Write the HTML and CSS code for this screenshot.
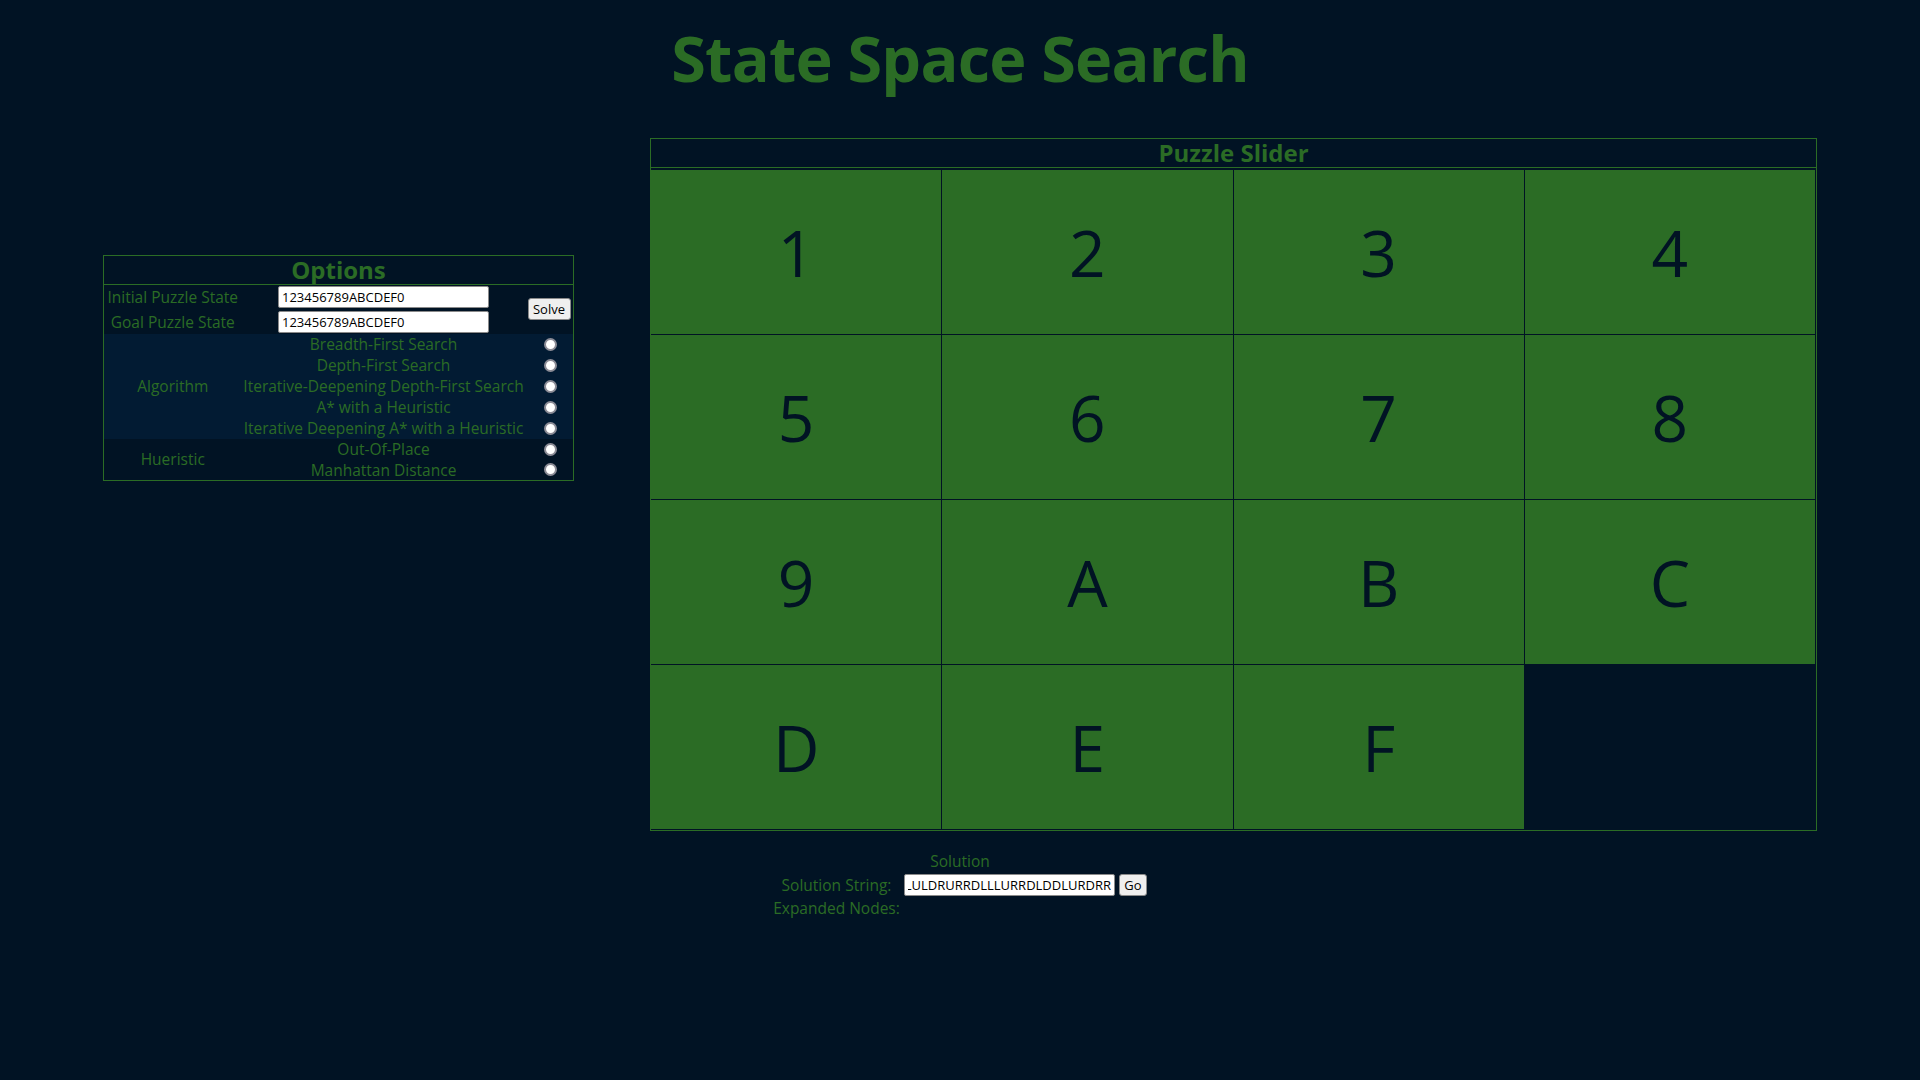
FILE: index.html
```html
<!DOCTYPE html>
<html lang="en">
<head>
<meta charset="utf-8">
<title>State Space Search</title>
<link rel="stylesheet" href="styles.css">
</head>
<body>
<h1 class="title">State Space Search</h1>
<div class="main">
  <table class="options">
    <colgroup><col class="c1"><col class="c2"><col class="c3"></colgroup>
    <thead><tr><th colspan="3" class="opt-head">Options</th></tr></thead>
    <tbody class="states">
      <tr class="r1">
        <td class="lbl">Initial Puzzle State</td>
        <td class="mid"><input class="field state" type="text" value="123456789ABCDEF0"></td>
        <td rowspan="2" class="btncell"><button class="btn solve" type="button">Solve</button></td>
      </tr>
      <tr class="r2">
        <td class="lbl">Goal Puzzle State</td>
        <td class="mid"><input class="field state" type="text" value="123456789ABCDEF0"></td>
      </tr>
    </tbody>
    <tbody class="algos">
      <tr><td rowspan="5" class="lbl">Algorithm</td><td class="mid">Breadth-First Search</td><td class="rc"><input class="radio" type="radio" name="algo"></td></tr>
      <tr><td class="mid">Depth-First Search</td><td class="rc"><input class="radio" type="radio" name="algo"></td></tr>
      <tr><td class="mid">Iterative-Deepening Depth-First Search</td><td class="rc"><input class="radio" type="radio" name="algo"></td></tr>
      <tr><td class="mid">A* with a Heuristic</td><td class="rc"><input class="radio" type="radio" name="algo"></td></tr>
      <tr><td class="mid">Iterative Deepening A* with a Heuristic</td><td class="rc"><input class="radio" type="radio" name="algo"></td></tr>
    </tbody>
    <tbody class="heur">
      <tr><td rowspan="2" class="lbl">Hueristic</td><td class="mid">Out-Of-Place</td><td class="rc"><input class="radio" type="radio" name="heur"></td></tr>
      <tr><td class="mid">Manhattan Distance</td><td class="rc"><input class="radio" type="radio" name="heur"></td></tr>
    </tbody>
  </table>

  <div class="puzzle">
    <div class="puzzle-head">Puzzle Slider</div>
    <div class="board">
      <div class="tile">1</div><div class="tile">2</div><div class="tile">3</div><div class="tile">4</div>
      <div class="tile">5</div><div class="tile">6</div><div class="tile">7</div><div class="tile">8</div>
      <div class="tile">9</div><div class="tile">A</div><div class="tile">B</div><div class="tile">C</div>
      <div class="tile">D</div><div class="tile">E</div><div class="tile">F</div><div class="tile blank"></div>
    </div>
  </div>
</div>

<div class="solution">
  <div class="sol-head">Solution</div>
  <div class="sol-label">Solution String:</div>
  <div class="sol-controls">
    <input class="field sol-input" type="text" value="RDLULDRURRDLLLURRDLDDLURDRR">
    <button class="btn go" type="button">Go</button>
  </div>
  <div class="sol-label">Expanded Nodes:</div>
  <div class="sol-empty"></div>
</div>
</body>
</html>
```
FILE: styles.css
```css
html, body {
  margin: 0;
  padding: 0;
}
body {
  background: #011324;
  color: #2b6c25;
  font-family: "Open Sans", "Noto Sans", sans-serif;
  font-size: 16px;
  min-height: 100vh;
}
.title {
  margin: 26px 0 0;
  text-align: center;
  font-size: 63px;
  line-height: 63px;
  font-weight: 700;
  letter-spacing: -0.8px;
}
.main {
  display: flex;
  align-items: flex-start;
  gap: 76px;
  padding: 0 103px;
  margin-top: 49px;
}

/* Options panel */
.options {
  margin-top: 117px;
  width: 470px;
  border-collapse: collapse;
  border: 1px solid #2b6c25;
  table-layout: fixed;
  flex: 0 0 auto;
}
.c1 { width: 138px; }
.c2 { width: 284px; }
.c3 { width: 48px; }
.options td, .options th {
  padding: 0;
  text-align: center;
  vertical-align: middle;
  white-space: nowrap;
  line-height: 20px;
}
.opt-head {
  height: 28px;
  line-height: 28px;
  font-size: 24px;
  font-weight: 700;
  border-bottom: 1px solid #2b6c25;
}
.states .r1 { height: 25px; }
.states .r2 { height: 24px; }
.algos { background: #021b33; }
.algos tr, .heur tr { height: 21px; }
.mid { font-size: 15.5px; }
.lbl { font-size: 15.5px; }
.rc { text-align: left; }
.radio {
  appearance: none;
  -webkit-appearance: none;
  display: block;
  box-sizing: border-box;
  width: 13px;
  height: 13px;
  margin: 0 0 0 18px;
  border: 2px solid #8c8c96;
  border-radius: 50%;
  background: #ffffff;
}
.field {
  box-sizing: border-box;
  height: 22px;
  background: #fff;
  color: #000;
  border: 1px solid #8a8a8a;
  border-radius: 2px;
  padding: 1px 3px;
  font-family: "Open Sans", "Noto Sans", sans-serif;
  font-size: 13px;
  outline: none;
}
.state {
  width: 211px;
  display: block;
  margin: 0 auto;
}
.btn {
  box-sizing: border-box;
  height: 22px;
  background: #efefef;
  color: #000;
  border: 1px solid #8a8a8a;
  border-radius: 3px;
  font-family: "Open Sans", "Noto Sans", sans-serif;
  font-size: 13px;
  padding: 0;
}
.solve {
  width: 43px;
  display: block;
  margin: 0 0 0 2px;
}

/* Puzzle */
.puzzle {
  box-sizing: border-box;
  width: 1167px;
  border: 1px solid #2b6c25;
  flex: 0 0 auto;
}
.puzzle-head {
  height: 28px;
  line-height: 28px;
  text-align: center;
  font-size: 24px;
  font-weight: 700;
  border-bottom: 1px solid #2b6c25;
}
.board {
  display: grid;
  grid-template-columns: repeat(4, 1fr);
  grid-auto-rows: 164px;
  gap: 1px;
  padding: 2px 1px 1px 0;
}
.tile {
  background: #2b6c25;
  color: #011324;
  font-size: 64px;
  display: flex;
  align-items: center;
  justify-content: center;
}
.tile.blank {
  background: transparent;
}

/* Solution */
.solution {
  margin-top: 19px;
  display: grid;
  grid-template-columns: 129px 244px;
  column-gap: 3px;
  justify-content: center;
  font-size: 15.5px;
}
.sol-head {
  grid-column: 1 / -1;
  text-align: center;
  line-height: 22px;
}
.sol-label {
  text-align: center;
  line-height: 22px;
  white-space: nowrap;
  align-self: center;
}
.sol-controls {
  display: flex;
  align-items: center;
  gap: 4px;
  height: 25px;
}
.sol-input {
  width: 211px;
  direction: rtl;
}
.go {
  width: 28px;
}
.sol-empty {
  height: 22px;
}
```
